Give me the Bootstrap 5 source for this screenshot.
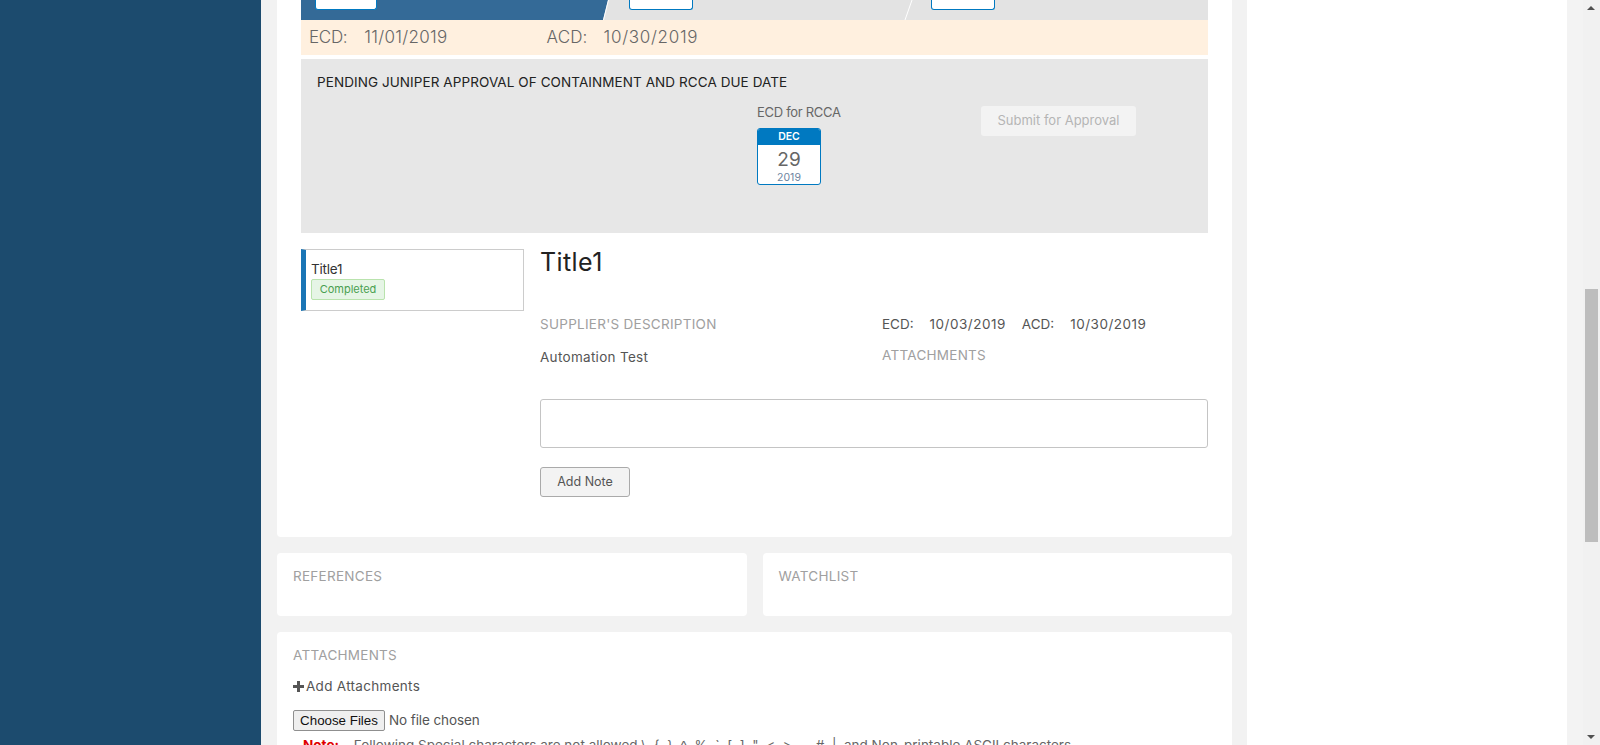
<!DOCTYPE html>
<html lang="en">
<head>
  <meta charset="UTF-8">
  <title>RCCA detail</title>
  <link rel="stylesheet" href="https://cdn.jsdelivr.net/npm/bootstrap@5.3.0/dist/css/bootstrap.min.css">
  <style>
    html, body { height: 100%; overflow: hidden; }
    body { font-family: "Inter", "Liberation Sans", sans-serif; font-size: 13.5px; color: #555; background: #fff; }

    .app-shell { height: 745px; overflow: hidden; }
    .side-nav { width: 261px; background: #1c4b6e; flex: none; }
    .content-area { width: 986px; background: #f2f2f2; padding: 0 15px 0 16px; flex: none; }
    .right-blank { flex: 1 1 auto; background: #fff; }
    .gutter-strip { width: 16px; background: #f3f3f3; flex: none; }

    /* fake scrollbar, page is shown scrolled */
    .scroll-track { width: 17px; background: #f1f1f1; flex: none; position: relative; }
    .scroll-thumb { position: absolute; left: 2px; right: 2px; top: 289px; height: 253px; background: #bdbdbd; }
    .scroll-up, .scroll-down { position: absolute; left: 4px; width: 0; height: 0; border-left: 4px solid transparent; border-right: 4px solid transparent; }
    .scroll-up { top: 6px; border-bottom: 4px solid #505050; }
    .scroll-down { bottom: 6px; border-top: 4px solid #505050; }

    .main-panel { background: #fff; height: 537px; padding: 0 24px; border-radius: 0 0 4px 4px; }
    .step-bar { height: 20px; background: #e3e3e3; position: relative; overflow: hidden; }
    .step-lines { position: absolute; left: 0; top: 0; width: 100%; height: 20px; }
    .step-box { position: absolute; top: 0; height: 10px; background: #fff; border: 1px solid #0079c1; border-top: 0; border-radius: 0 0 3px 3px; }
    .step-box-one { left: 14px; width: 62px; }
    .step-box-two { left: 328px; width: 64px; }
    .step-box-three { left: 630px; width: 64px; }

    .date-band { height: 35px; background: #fff0df; font-size: 17px; color: #666; padding-left: 8px; font-weight: 300; }
    .band-key { letter-spacing: -.3px; }
    .band-val-one { margin-left: 17px; letter-spacing: .3px; }
    .band-key-two { margin-left: 99px; letter-spacing: .15px; }
    .band-val-two { margin-left: 16px; letter-spacing: .7px; }

    .pending-box { height: 174px; margin-top: 4px; background: #e7e7e7; padding: 14px 16px 0; }
    .pending-title { color: #222; font-size: 13.5px; line-height: 18px; letter-spacing: .08px; }
    .ecd-col { margin-left: 440px; width: 224px; margin-top: 12px; }
    .ecd-label { line-height: 18px; font-size: 13px; letter-spacing: -.3px; color: #666; }
    .cal-card { width: 64px; height: 57px; margin-top: 7px; background: #fff; border: 1px solid #0079c1; border-radius: 3px; overflow: hidden; text-align: center; }
    .cal-month { background: #0079c1; color: #fff; height: 16px; line-height: 16px; font-size: 10.5px; font-weight: 600; }
    .cal-day { font-size: 19px; line-height: 24px; color: #666; margin-top: 3px; }
    .cal-year { font-size: 10.5px; line-height: 12px; color: #6d84a0; }
    .submit-btn { width: 155px; height: 30px; margin-top: 15px; padding: 0; border: 0; border-radius: 3px; background: #f3f3f3; color: #b5b5b5; font-size: 13px; }

    .detail-wrap { margin-top: 16px; }
    .issue-col { width: 223px; flex: none; }
    .issue-item { height: 62px; border: 1px solid #ccc; border-left: 5px solid #1a75b5; padding: 11px 0 0 5px; }
    .issue-name { color: #333; line-height: 17px; font-size: 13.5px; letter-spacing: -.2px; }
    .status-tag { display: block; width: 74px; height: 21px; line-height: 19px; text-align: center; margin-top: 1px; font-size: 11px; color: #4aa050; background: #e6f5e6; border: 1px solid #b9e3ad; border-radius: 2px; }
    .issue-main { margin-left: 16px; flex: 1 1 auto; }
    .issue-title { font-size: 25px; font-weight: 400; color: #222; line-height: 28px; margin: -1px 0 0; letter-spacing: .4px; }
    .issue-cols { margin-top: 39px; height: 84px; }
    .col-left { width: 342px; flex: none; }
    .section-label { color: #a0a0a0; font-size: 13.5px; line-height: 18px; letter-spacing: .27px; }
    .issue-desc { margin-top: 15px; line-height: 18px; letter-spacing: .3px; }
    .date-pair { line-height: 18px; font-size: 13.5px; }
    .pair-val { margin-left: 16px; letter-spacing: .5px; }
    .pair-key-two { margin-left: 16px; }
    .attach-label { margin-top: 13px; }
    .note-box { display: block; width: 100%; height: 49px; border: 1px solid #c4c4c4; border-radius: 3px; resize: none; }
    .note-btn { width: 90px; height: 30px; margin-top: 19px; padding: 0; background: #f3f3f3; border: 1px solid #aaa; border-radius: 3px; color: #555; font-size: 12.5px; }

    .panel-row { margin-top: 16px; gap: 16px; }
    .small-panel { height: 63px; flex: 1 1 0; background: #fff; border-radius: 4px; padding: 14px 16px; }
    .attach-panel { margin-top: 16px; height: 200px; background: #fff; border-radius: 4px 4px 0 0; padding: 14px 16px; }
    .add-link { margin-top: 13px; line-height: 18px; color: #555; letter-spacing: .3px; }
    .plus-icon { width: 11px; height: 11px; margin-right: 2px; vertical-align: -1px; }
    .file-field { display: block; margin-top: 15px; font-size: 13.5px; color: #555; letter-spacing: -.1px; }
    .file-field::file-selector-button { font-family: "Liberation Sans", sans-serif; font-size: 13.33px; letter-spacing: 0; width: 92px; height: 21px; margin-right: 4px; padding: 0; color: #111; background: #efefef; border: 1px solid #8f8f8f; border-radius: 2px; }
    .note-line { margin-top: 5px; padding-left: 10px; line-height: 18px; white-space: pre; color: #666; }
    .note-line b { color: #e00000; margin-right: 11px; }
  </style>
</head>
<body>
  <div class="app-shell d-flex">
    <!-- SIDEBAR -->
    <div class="side-nav"></div>

    <!-- MAIN CONTENT -->
    <div class="content-area">
      <div class="main-panel">
        <div class="step-bar">
          <svg class="step-lines" viewBox="0 0 907 20" preserveAspectRatio="none">
            <polygon points="0,0 307,0 302,20 0,20" fill="#346a97"/>
            <line x1="307.5" y1="0" x2="302.5" y2="20" stroke="#fff" stroke-width="1"/>
            <line x1="611" y1="0" x2="604" y2="20" stroke="#fff" stroke-width="1"/>
          </svg>
          <div class="step-box step-box-one"></div>
          <div class="step-box step-box-two"></div>
          <div class="step-box step-box-three"></div>
        </div>
        <div class="date-band d-flex align-items-center">
          <span class="band-key">ECD:</span>
          <span class="band-val-one">11/01/2019</span>
          <span class="band-key-two">ACD:</span>
          <span class="band-val-two">10/30/2019</span>
        </div>
        <div class="pending-box">
          <div class="pending-title">PENDING JUNIPER APPROVAL OF CONTAINMENT AND RCCA DUE DATE</div>
          <div class="d-flex">
            <div class="ecd-col">
              <div class="ecd-label">ECD for RCCA</div>
              <div class="cal-card">
                <div class="cal-month">DEC</div>
                <div class="cal-day">29</div>
                <div class="cal-year">2019</div>
              </div>
            </div>
            <div><button type="button" class="submit-btn" disabled>Submit for Approval</button></div>
          </div>
        </div>

        <div class="detail-wrap d-flex">
          <div class="issue-col">
            <div class="issue-item">
              <div class="issue-name">Title1</div>
              <span class="status-tag">Completed</span>
            </div>
          </div>
          <div class="issue-main">
            <h2 class="issue-title">Title1</h2>
            <div class="issue-cols d-flex">
              <div class="col-left">
                <div class="section-label">SUPPLIER'S DESCRIPTION</div>
                <div class="issue-desc">Automation Test</div>
              </div>
              <div>
                <div class="date-pair"><span>ECD:</span><span class="pair-val">10/03/2019</span><span class="pair-key-two">ACD:</span><span class="pair-val">10/30/2019</span></div>
                <div class="section-label attach-label">ATTACHMENTS</div>
              </div>
            </div>
            <textarea class="note-box" aria-label="Note"></textarea>
            <button type="button" class="note-btn">Add Note</button>
          </div>
        </div>
      </div>

      <div class="panel-row d-flex">
        <div class="small-panel section-label">REFERENCES</div>
        <div class="small-panel section-label">WATCHLIST</div>
      </div>

      <div class="attach-panel">
        <div class="section-label">ATTACHMENTS</div>
        <div class="add-link">
          <svg class="plus-icon" viewBox="0 0 11 11"><path d="M4 0h3v4h4v3H7v4H4V7H0V4h4z" fill="#555"/></svg>Add Attachments
        </div>
        <input type="file" class="file-field" multiple>
        <div class="note-line"><b>Note:</b> Following Special characters are not allowed \  {  }  ^  %  `  [  ]  "  &lt;  &gt;  ~  #  |  and Non-printable ASCII characters</div>
      </div>
    </div>

    <div class="right-blank"></div>
    <div class="gutter-strip"></div>

    <!-- fake scrollbar -->
    <div class="scroll-track">
      <div class="scroll-up"></div>
      <div class="scroll-thumb"></div>
      <div class="scroll-down"></div>
    </div>
  </div>
  <script src="https://cdn.jsdelivr.net/npm/bootstrap@5.3.0/dist/js/bootstrap.bundle.min.js"></script>
</body>
</html>
